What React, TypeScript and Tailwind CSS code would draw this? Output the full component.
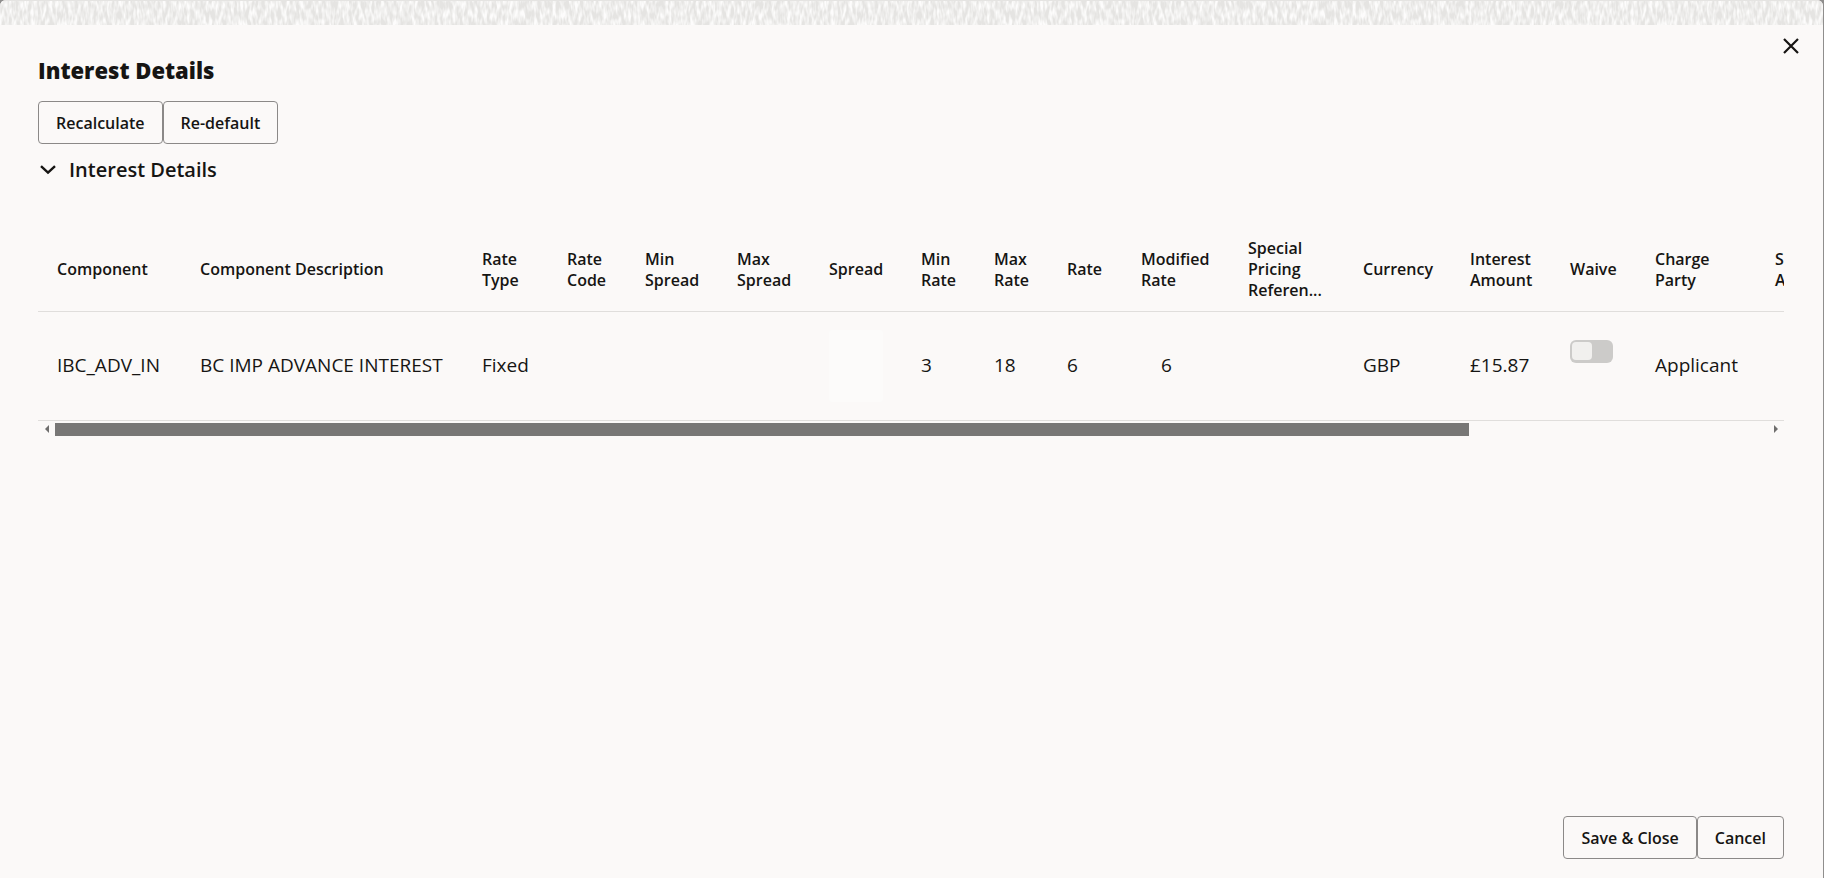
import { useRef, useState, type ReactNode } from 'react';

interface Column {
  id: string;
  label: string[];
  width: string;
  value?: string;
}

const COLUMNS: Column[] = [
  { id: 'component', label: ['Component'], width: 'w-[143px]', value: 'IBC_ADV_IN' },
  { id: 'description', label: ['Component Description'], width: 'w-[282px]', value: 'BC IMP ADVANCE INTEREST' },
  { id: 'rateType', label: ['Rate', 'Type'], width: 'w-[85px]', value: 'Fixed' },
  { id: 'rateCode', label: ['Rate', 'Code'], width: 'w-[78px]' },
  { id: 'minSpread', label: ['Min', 'Spread'], width: 'w-[92px]' },
  { id: 'maxSpread', label: ['Max', 'Spread'], width: 'w-[92px]' },
  { id: 'spread', label: ['Spread'], width: 'w-[92px]' },
  { id: 'minRate', label: ['Min', 'Rate'], width: 'w-[73px]', value: '3' },
  { id: 'maxRate', label: ['Max', 'Rate'], width: 'w-[73px]', value: '18' },
  { id: 'rate', label: ['Rate'], width: 'w-[74px]', value: '6' },
  { id: 'modifiedRate', label: ['Modified', 'Rate'], width: 'w-[107px]', value: '6' },
  { id: 'specialPricing', label: ['Special', 'Pricing', 'Referen...'], width: 'w-[115px]' },
  { id: 'currency', label: ['Currency'], width: 'w-[107px]', value: 'GBP' },
  { id: 'amount', label: ['Interest', 'Amount'], width: 'w-[100px]', value: '£15.87' },
  { id: 'waive', label: ['Waive'], width: 'w-[85px]' },
  { id: 'chargeParty', label: ['Charge', 'Party'], width: 'w-[120px]', value: 'Applicant' },
  { id: 'settlement', label: ['S', 'A'], width: 'w-[358px]' },
];

function OutlineButton({ children }: { children: ReactNode }) {
  return (
    <button
      type="button"
      className="h-[43px] whitespace-nowrap rounded border border-[#8b8988] px-[17px] text-base font-semibold hover:bg-black/5"
    >
      {children}
    </button>
  );
}

// Woven strip along the top edge of the dialog
function TextureStrip() {
  return (
    <svg className="block h-[25px] w-full bg-[#e5e4e2]" aria-hidden="true">
      <filter id="weave" x="0" y="0" width="100%" height="100%">
        <feTurbulence type="fractalNoise" baseFrequency="0.32 0.1" numOctaves="2" seed="7" />
        <feColorMatrix values="0 0 0 0 0.98  0 0 0 0 0.976  0 0 0 0 0.97  2.6 0 0 0 -0.9" />
      </filter>
      <rect y="1" width="100%" height="24" filter="url(#weave)" />
    </svg>
  );
}

function CellContent({ column }: { column: Column }) {
  if (column.id === 'spread') {
    return <input aria-label="Spread" className="block h-[72px] w-full rounded bg-[#fcfbfa] text-center outline-none" />;
  }
  if (column.id === 'waive') {
    return (
      <label className="mb-[29px] block h-[23px] w-[43px]">
        <input type="checkbox" role="switch" aria-label="Waive" className="peer sr-only" />
        <span className="flex h-full w-full items-center rounded-md bg-[#cccbc9] px-0.5 peer-checked:justify-end">
          <span className="h-[18px] w-5 rounded bg-[#f1f0ee]" />
        </span>
      </label>
    );
  }
  if (column.id === 'modifiedRate') {
    return <span className="pl-5">{column.value}</span>;
  }
  return <>{column.value}</>;
}

export default function App() {
  const scroller = useRef<HTMLDivElement>(null);
  const [offset, setOffset] = useState(0);

  function scrollTable(delta: number) {
    scroller.current?.scrollBy({ left: delta });
  }

  function handleScroll() {
    const el = scroller.current;
    if (el) setOffset((el.scrollLeft / el.scrollWidth) * 100);
  }

  return (
    <div className="min-h-screen bg-[#8f8e8d] pr-px font-['Open_Sans','Noto_Sans',sans-serif] text-[#161513]">
      <div role="dialog" aria-labelledby="dialog-title" className="relative flex min-h-screen flex-col overflow-hidden rounded-t-md bg-[#fbf9f8]">
        <TextureStrip />
        <button type="button" aria-label="Close" className="absolute right-5 top-[34px] p-1">
          <svg viewBox="0 0 16 16" className="size-4" fill="none" stroke="currentColor" strokeWidth="2.2">
            <path d="M1 1l14 14M15 1L1 15" />
          </svg>
        </button>

        <main className="flex grow flex-col px-[38px] pb-[19px] pt-7 lg:pr-[39px]">
          <h1 id="dialog-title" className="text-[22px] font-extrabold leading-[34px]">
            Interest Details
          </h1>
          <div className="mt-3.5 flex">
            <OutlineButton>Recalculate</OutlineButton>
            <OutlineButton>Re-default</OutlineButton>
          </div>
          <h2 className="mt-3 text-xl font-semibold">
            <button type="button" aria-expanded="true" className="flex items-center gap-[13px] pl-0.5">
              <svg viewBox="0 0 16 10" className="h-2.5 w-4" fill="none" stroke="currentColor" strokeWidth="2.4">
                <path d="M1 1.2l7 6.4 7-6.4" />
              </svg>
              Interest Details
            </button>
          </h2>

          <div ref={scroller} onScroll={handleScroll} className="mt-[45px] overflow-hidden">
            <table className="w-[2076px] table-fixed border-collapse">
              <thead>
                <tr className="h-[82px] border-b border-[#e0dedc]">
                  {COLUMNS.map((column) => (
                    <th
                      key={column.id}
                      scope="col"
                      className={`${column.width} whitespace-nowrap px-[19px] text-left align-middle text-base font-semibold leading-[21px]`}
                    >
                      {column.label.map((line) => (
                        <span key={line} className="block">
                          {line}
                        </span>
                      ))}
                    </th>
                  ))}
                </tr>
              </thead>
              <tbody>
                <tr className="h-[109px] border-b border-[#e0dedc]">
                  {COLUMNS.map((column) => (
                    <td key={column.id} className="whitespace-nowrap px-[19px] align-middle text-[19px]">
                      <CellContent column={column} />
                    </td>
                  ))}
                </tr>
              </tbody>
            </table>
          </div>
          <div className="mt-0.5 flex h-[13px] items-center text-[#6f6e6d]">
            <button type="button" aria-label="Scroll left" onClick={() => scrollTable(-200)} className="flex w-[17px] justify-center">
              <svg viewBox="0 0 4 8" className="h-2 w-1" fill="currentColor">
                <path d="M4 0v8L0 4z" />
              </svg>
            </button>
            <div className="h-full grow">
              <div className="h-full w-[82.6%] bg-[#787776]" style={{ marginLeft: `${offset}%` }} />
            </div>
            <button type="button" aria-label="Scroll right" onClick={() => scrollTable(200)} className="flex w-[17px] justify-center">
              <svg viewBox="0 0 4 8" className="h-2 w-1" fill="currentColor">
                <path d="M0 0v8l4-4z" />
              </svg>
            </button>
          </div>

          <div className="mt-auto flex justify-end pt-6">
            <OutlineButton>Save &amp; Close</OutlineButton>
            <OutlineButton>Cancel</OutlineButton>
          </div>
        </main>
      </div>
    </div>
  );
}
